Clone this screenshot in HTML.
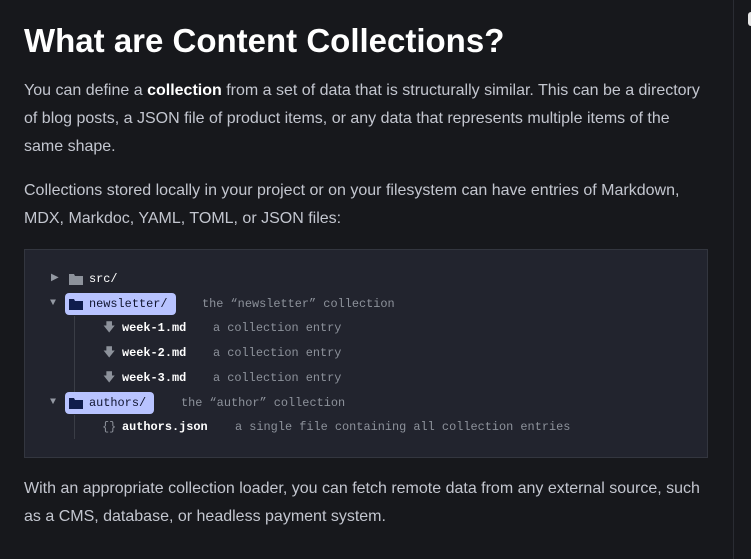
<!DOCTYPE html>
<html><head><style>
html,body{margin:0;padding:0;width:751px;height:559px;overflow:hidden;background:#17181c;}
body{font-family:"Liberation Sans",sans-serif;color:#c3c6cf;position:relative;}
.vl{position:absolute;left:733px;top:0;bottom:0;width:1px;background:#2a2c33;}
.dot{position:absolute;left:748px;top:12px;width:6px;height:14px;background:#e6e6e6;border-radius:3px;}
h1{position:absolute;left:24px;top:22px;margin:0;font-size:33px;font-weight:bold;color:#fff;}
p{position:absolute;left:24px;margin:0;font-size:16px;line-height:28px;white-space:nowrap;letter-spacing:0;}
b{color:#fff;}
.code{position:absolute;left:24px;top:249px;width:682px;height:207px;background:#22242e;border:1px solid #33363f;font-family:"Liberation Mono",monospace;font-size:11.9px;}
.r{position:absolute;height:22px;line-height:22px;white-space:nowrap;color:#fff;font-weight:bold;}
.c{position:absolute;color:#8d929b;white-space:nowrap;height:22px;line-height:22px;}
.hl{position:absolute;background:#b8c3ff;border-radius:4px;height:22px;}
.tri{position:absolute;color:#9499a3;font-size:10px;}
.guide{position:absolute;width:1px;background:#3a3d46;}
.n{color:#101530;font-weight:normal;}
</style></head><body>
<div class="vl"></div><div class="dot"></div>
<h1>What are Content Collections?</h1>
<p style="top:77px">You can define a <b>collection</b> from a set of data that is structurally similar. This can be a directory<br>of blog posts, a JSON file of product items, or any data that represents multiple items of the<br>same shape.</p>
<p style="top:177px">Collections stored locally in your project or on your filesystem can have entries of Markdown,<br>MDX, Markdoc, YAML, TOML, or JSON files:</p>
<div class="code">
<div class="guide" style="left:49px;top:66px;height:82px"></div>
<div class="guide" style="left:49px;top:165px;height:24px"></div>
<span class="tri" style="left:26px;top:22px">&#9654;</span>
<svg width="14" height="12" style="position:absolute;left:44px;top:23px"><path d="M0 1h5l1 2h8v9H0z" fill="#8d929b"/></svg>
<div class="r" style="left:64px;top:18px;font-weight:normal">src/</div>
<span class="tri" style="left:25px;top:48px">&#9660;</span>
<div class="hl" style="left:40px;top:43px;width:111px"></div>
<svg width="14" height="12" style="position:absolute;left:44px;top:48px"><path d="M0 1h5l1 2h8v9H0z" fill="#101d4d"/></svg>
<div class="r n" style="left:64px;top:43px">newsletter/</div>
<span class="c" style="left:177px;top:43px">the “newsletter” collection</span>
<span class="c" style="left:78px;top:67px">&#129095;</span><div class="r" style="left:97px;top:67px">week-1.md</div><span class="c" style="left:188px;top:67px">a collection entry</span>
<span class="c" style="left:78px;top:92px">&#129095;</span><div class="r" style="left:97px;top:92px">week-2.md</div><span class="c" style="left:188px;top:92px">a collection entry</span>
<span class="c" style="left:78px;top:117px">&#129095;</span><div class="r" style="left:97px;top:117px">week-3.md</div><span class="c" style="left:188px;top:117px">a collection entry</span>
<span class="tri" style="left:25px;top:147px">&#9660;</span>
<div class="hl" style="left:40px;top:142px;width:89px"></div>
<svg width="14" height="12" style="position:absolute;left:44px;top:147px"><path d="M0 1h5l1 2h8v9H0z" fill="#101d4d"/></svg>
<div class="r n" style="left:64px;top:142px">authors/</div>
<span class="c" style="left:156px;top:142px">the “author” collection</span>
<span class="c" style="left:77px;top:166px">{}</span><div class="r" style="left:97px;top:166px">authors.json</div><span class="c" style="left:210px;top:166px">a single file containing all collection entries</span>
</div>
<p style="top:475px">With an appropriate collection loader, you can fetch remote data from any external source, such<br>as a CMS, database, or headless payment system.</p>
</body></html>
